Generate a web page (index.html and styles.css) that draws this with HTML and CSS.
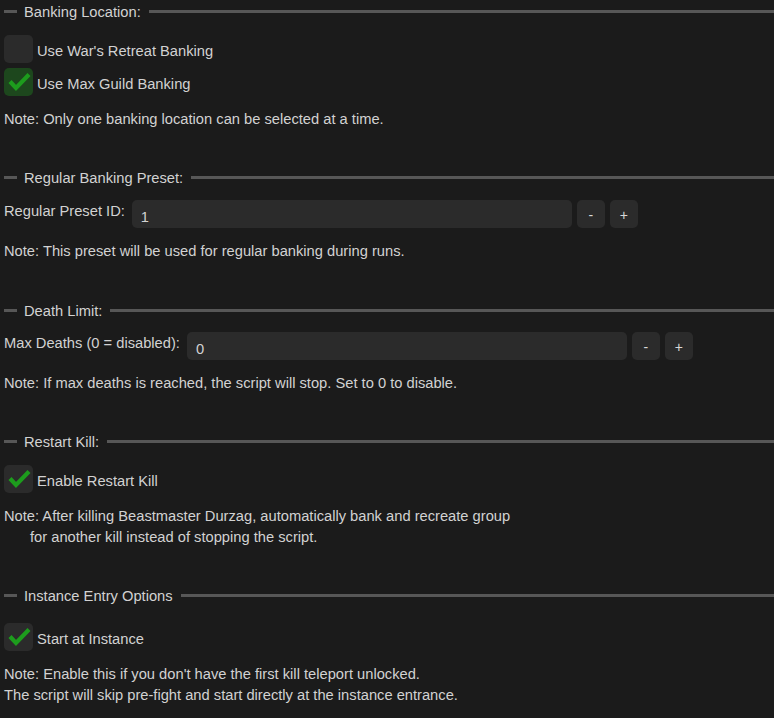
FILE: index.html
```html
<!DOCTYPE html>
<html>
<head>
<meta charset="utf-8">
<link rel="stylesheet" href="styles.css">
</head>
<body>
<div class="panel">
  <div class="sep first"><span class="dash"></span><span class="sep-title">Banking Location:</span><span class="rule"></span></div>
  <div class="check gap13"><span class="box"></span><span class="label">Use War's Retreat Banking</span></div>
  <div class="check gap5"><span class="box on hot"><svg viewBox="0 0 28 28"><path d="M5 13.5 L11 20 L24 6.5" /></svg></span><span class="label">Use Max Guild Banking</span></div>
  <p class="note">Note: Only one banking location can be selected at a time.</p>

  <div class="sep"><span class="dash"></span><span class="sep-title">Regular Banking Preset:</span><span class="rule"></span></div>
  <div class="field gap12"><span class="flabel">Regular Preset ID:</span><span class="input">1</span><span class="btn">-</span><span class="btn">+</span></div>
  <p class="note">Note: This preset will be used for regular banking during runs.</p>

  <div class="sep wide"><span class="dash"></span><span class="sep-title">Death Limit:</span><span class="rule"></span></div>
  <div class="field gap11"><span class="flabel">Max Deaths (0 = disabled):</span><span class="input">0</span><span class="btn">-</span><span class="btn">+</span></div>
  <p class="note">Note: If max deaths is reached, the script will stop. Set to 0 to disable.</p>

  <div class="sep"><span class="dash"></span><span class="sep-title">Restart Kill:</span><span class="rule"></span></div>
  <div class="check gap13"><span class="box on"><svg viewBox="0 0 28 28"><path d="M5 13.5 L11 20 L24 6.5" /></svg></span><span class="label">Enable Restart Kill</span></div>
  <p class="note">Note: After killing Beastmaster Durzag, automatically bank and recreate group<br><span class="indent">for another kill instead of stopping the script.</span></p>

  <div class="sep"><span class="dash"></span><span class="sep-title">Instance Entry Options</span><span class="rule"></span></div>
  <div class="check gap17"><span class="box on"><svg viewBox="0 0 28 28"><path d="M5 13.5 L11 20 L24 6.5" /></svg></span><span class="label">Start at Instance</span></div>
  <p class="note">Note: Enable this if you don't have the first kill teleport unlocked.<br>The script will skip pre-fight and start directly at the instance entrance.</p>
</div>
</body>
</html>
```
FILE: styles.css
```css
html, body {
  margin: 0;
  padding: 0;
  background: #1b1b1b;
}
body {
  width: 774px;
  height: 718px;
  overflow: hidden;
  font-family: "Liberation Sans", Arial, sans-serif;
  font-size: 14.7px;
  color: #d2d2d2;
}
.panel {
  padding: 0 0 0 4px;
  display: flex;
  flex-direction: column;
}
.sep {
  display: flex;
  align-items: center;
  height: 22px;
  margin-top: 36px;
}
.sep.first { margin-top: 0; }
.sep.wide { margin-top: 37px; }
.dash {
  width: 13px;
  height: 3px;
  background: #575757;
  flex: none;
}
.sep-title {
  margin: 1px 8px 0 7px;
  white-space: nowrap;
}
.rule {
  flex: 1;
  height: 3px;
  background: #575757;
}
.check {
  display: flex;
  align-items: center;
  height: 28px;
}
.gap5 { margin-top: 5px; }
.gap11 { margin-top: 11px; }
.gap12 { margin-top: 12px; }
.gap13 { margin-top: 13px; }
.gap17 { margin-top: 17px; }
.box {
  width: 29px;
  height: 28px;
  border-radius: 5px;
  background: #2b2b2b;
  flex: none;
  display: flex;
  align-items: center;
  justify-content: center;
}
.box.hot { background: #1d471d; }
.box svg {
  width: 28px;
  height: 28px;
}
.box path {
  fill: none;
  stroke: #1d9c1d;
  stroke-width: 4.2;
  stroke-linecap: butt;
  stroke-linejoin: miter;
}
.label {
  margin-left: 4px;
  padding-top: 3px;
}
.field {
  display: flex;
  align-items: flex-start;
  height: 28px;
}
.flabel {
  line-height: 22px;
  margin-right: 7px;
  white-space: nowrap;
}
.input {
  width: 440px;
  height: 28px;
  box-sizing: border-box;
  background: #2b2b2b;
  border-radius: 5px;
  padding: 6px 0 0 9px;
  line-height: 22px;
}
.btn {
  width: 28px;
  height: 28px;
  margin-left: 5px;
  border-radius: 5px;
  background: #2b2b2b;
  display: flex;
  align-items: center;
  justify-content: center;
  line-height: 1;
  font-size: 14px;
  color: #d8d8d8;
  padding-top: 2px;
  box-sizing: border-box;
  flex: none;
}
.note {
  margin: 13px 0 0;
  line-height: 21px;
}
.indent { padding-left: 26px; }
```
